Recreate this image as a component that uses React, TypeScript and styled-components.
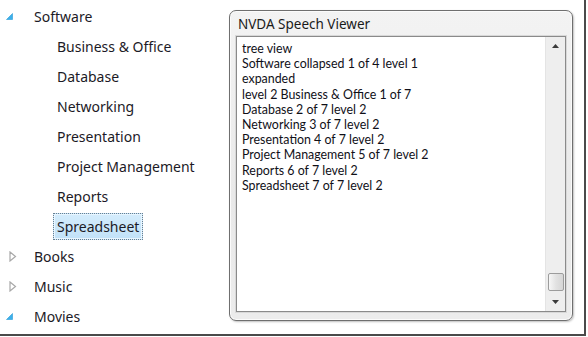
import styled, { createGlobalStyle } from "styled-components"

const Global = createGlobalStyle`
  html, body { margin: 0; padding: 0; background: #ffffff; }
  body { font-family: "Noto Sans", "Open Sans", sans-serif; }
`

const Page = styled.div`
  box-sizing: border-box;
  width: 586px;
  height: 336px;
  border-right: 2px solid #4a4a4a;
  border-bottom: 2px solid #4a4a4a;
  background: #ffffff;
  display: flex;
  flex-direction: row;
  overflow: hidden;
`

const Tree = styled.ul`
  list-style: none;
  margin: 0;
  padding: 1px 0 0 0;
  width: 229px;
  flex-shrink: 0;
`

const Row = styled.li<{ $level: number }>`
  height: 30px;
  display: flex;
  align-items: center;
  padding-left: ${(p) => (p.$level === 1 ? 6 : 53)}px;
  font-size: 14px;
  color: #1c1a26;
`

const Arrow = styled.span`
  width: 24px;
  height: 14px;
  display: flex;
  align-items: center;
`

const Label = styled.span<{ $selected?: boolean }>`
  box-sizing: border-box;
  height: 27px;
  display: flex;
  align-items: center;
  padding: 0 3px;
  border: 1px dotted ${(p) => (p.$selected ? "#6a7f90" : "transparent")};
  background: ${(p) => (p.$selected ? "linear-gradient(#d4ecfc, #c2e2f8)" : "transparent")};
  box-shadow: ${(p) => (p.$selected ? "inset 0 0 0 1px #e9f6ff" : "none")};
`

const Window = styled.div`
  box-sizing: border-box;
  margin: 10px 0 0 0;
  width: 344px;
  height: 311px;
  border: 1px solid #6f6f6f;
  border-radius: 7px;
  background: linear-gradient(#f3f3f3, #e9e9e9 60%, #ececec);
  box-shadow: inset 0 0 0 1px #fbfbfb, 1px 1px 2px rgba(0, 0, 0, 0.25);
  display: flex;
  flex-direction: column;
  padding: 0 6px 8px 6px;
`

const Title = styled.div`
  height: 25px;
  display: flex;
  align-items: center;
  padding-left: 2px;
  font-size: 13.5px;
  color: #1a1a1a;
`

const TextArea = styled.div`
  flex: 1;
  display: flex;
  border: 1px solid #8a8a8a;
  box-shadow: 0 0 0 1px #d8d8d8;
  background: #ffffff;
`

const Lines = styled.div`
  flex: 1;
  padding: 4px 0 0 5px;
  font-family: Lato, "Noto Sans", sans-serif;
  font-size: 12.4px;
  line-height: 15.2px;
  color: #101018;
`

const ScrollBar = styled.div`
  width: 19px;
  background: #eeeeee;
  border-left: 1px solid #e4e4e4;
  display: flex;
  flex-direction: column;
  align-items: center;
`

const ScrollBtn = styled.div`
  height: 18px;
  width: 100%;
  display: flex;
  align-items: center;
  justify-content: center;
`

const Track = styled.div`
  flex: 1;
  width: 100%;
  display: flex;
  flex-direction: column;
  justify-content: flex-end;
  align-items: center;
`

const Thumb = styled.div`
  box-sizing: border-box;
  width: 16px;
  height: 18px;
  margin-bottom: 2px;
  border: 1px solid #9c9c9c;
  border-radius: 2px;
  background: linear-gradient(90deg, #f7f7f7, #e2e2e2 50%, #d6d6d6);
`

const Expanded = () => (
  <svg width="7" height="7" viewBox="0 0 7 7">
    <polygon points="6.5,0.5 6.5,6.5 0.5,6.5" fill="#3cb0ea" stroke="#2a9ad6" strokeWidth="0.6" />
  </svg>
)

const Collapsed = () => (
  <svg width="8" height="11" viewBox="0 0 8 11" style={{ marginLeft: 3 }}>
    <polygon points="1,1 6.5,5.5 1,10" fill="#ffffff" stroke="#a8a8a8" strokeWidth="1.2" />
  </svg>
)

const Caret = ({ up }: { up?: boolean }) => (
  <svg width="7" height="4" viewBox="0 0 7 4">
    <polygon points={up ? "0,4 7,4 3.5,0" : "0,0 7,0 3.5,4"} fill="#3a3a3a" />
  </svg>
)

const children = [
  "Business & Office",
  "Database",
  "Networking",
  "Presentation",
  "Project Management",
  "Reports",
  "Spreadsheet",
]

const speech = [
  "tree view",
  "Software collapsed 1 of 4 level 1",
  "expanded",
  "level 2 Business & Office 1 of 7",
  "Database 2 of 7 level 2",
  "Networking 3 of 7 level 2",
  "Presentation 4 of 7 level 2",
  "Project Management 5 of 7 level 2",
  "Reports 6 of 7 level 2",
  "Spreadsheet 7 of 7 level 2",
]

const App = () => {
  return (
    <Page>
      <Global />
      <Tree>
        <Row $level={1}>
          <Arrow><Expanded /></Arrow>
          <Label>Software</Label>
        </Row>
        {children.map((c) => (
          <Row $level={2} key={c}>
            <Label $selected={c === "Spreadsheet"}>{c}</Label>
          </Row>
        ))}
        <Row $level={1}>
          <Arrow><Collapsed /></Arrow>
          <Label>Books</Label>
        </Row>
        <Row $level={1}>
          <Arrow><Collapsed /></Arrow>
          <Label>Music</Label>
        </Row>
        <Row $level={1}>
          <Arrow><Expanded /></Arrow>
          <Label>Movies</Label>
        </Row>
      </Tree>

      <Window>
        <Title>NVDA Speech Viewer</Title>
        <TextArea>
          <Lines>
            {speech.map((s, i) => (
              <div key={i}>{s}</div>
            ))}
          </Lines>
          <ScrollBar>
            <ScrollBtn><Caret up /></ScrollBtn>
            <Track><Thumb /></Track>
            <ScrollBtn><Caret /></ScrollBtn>
          </ScrollBar>
        </TextArea>
      </Window>
    </Page>
  )
}

export default App
